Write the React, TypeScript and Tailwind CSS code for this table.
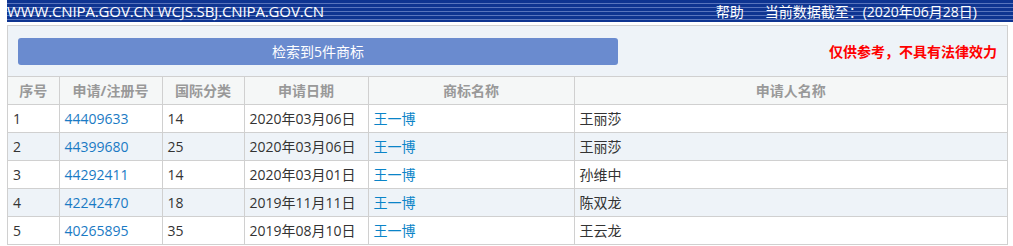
import React from 'react';

interface Row {
  no: number;
  regNo: string;
  cls: string;
  date: string;
  name: string;
  applicant: string;
}

const rows: Row[] = [
  { no: 1, regNo: '44409633', cls: '14', date: '2020年03月06日', name: '王一博', applicant: '王丽莎' },
  { no: 2, regNo: '44399680', cls: '25', date: '2020年03月06日', name: '王一博', applicant: '王丽莎' },
  { no: 3, regNo: '44292411', cls: '14', date: '2020年03月01日', name: '王一博', applicant: '孙维中' },
  { no: 4, regNo: '42242470', cls: '18', date: '2019年11月11日', name: '王一博', applicant: '陈双龙' },
  { no: 5, regNo: '40265895', cls: '35', date: '2019年08月10日', name: '王一博', applicant: '王云龙' },
];

const font = { fontFamily: '"Open Sans", "Noto Sans CJK SC", sans-serif' };

export default function App() {
  return (
    <div className="w-[1013px] h-[246px] bg-white pl-[7px] text-[14px] text-[#333]" style={font}>
      {/* Top bar */}
      <div className="h-[22px] flex items-center text-white bg-[repeating-linear-gradient(180deg,#0e3491_0px,#0e3491_3px,#5874bd_3px,#5874bd_4px)]">
        <span className="text-[15px] leading-none pt-[1px] tracking-[-0.13px]">WWW.CNIPA.GOV.CN WCJS.SBJ.CNIPA.GOV.CN</span>
        <span className="ml-auto text-[14px] leading-none pt-[1px]">帮助</span>
        <span className="ml-[21px] mr-[36px] text-[14px] leading-none pt-[1px]">当前数据截至：(2020年06月28日)</span>
      </div>

      {/* Panel */}
      <div className="mt-[3px] w-[1001px] border-x border-[#d0d0d0]">
        <div className="h-[51px] bg-[#eef3f8] flex items-center pl-[10px] pr-[10px] border-t border-[#d0d0d0]">
          <div className="w-[600px] h-[27px] mt-[1px] rounded-[3px] bg-[#6a8bcf] text-white flex items-center justify-center">
            检索到5件商标
          </div>
          <div className="ml-auto font-bold text-[#ff0000] mt-[1px]">仅供参考，不具有法律效力</div>
        </div>

        <table className="w-full border-collapse table-fixed">
          <colgroup>
            <col className="w-[51px]" />
            <col className="w-[103px]" />
            <col className="w-[82px]" />
            <col className="w-[124px]" />
            <col className="w-[206px]" />
            <col />
          </colgroup>
          <thead>
            <tr className="h-[28px] bg-[#f5f7f7] text-[#999] font-bold">
              {['序号', '申请/注册号', '国际分类', '申请日期', '商标名称', '申请人名称'].map((h, i) => (
                <th
                  key={h}
                  className={`border-y border-[#d0d0d0] font-bold text-center ${i > 0 ? 'border-l' : ''}`}
                >
                  {h}
                </th>
              ))}
            </tr>
          </thead>
          <tbody>
            {rows.map((r) => (
              <tr key={r.no} className={`h-[28px] ${r.no % 2 === 0 ? 'bg-[#eef3f8]' : 'bg-white'}`}>
                <td className="border-y border-[#d0d0d0] pl-[5px]">{r.no}</td>
                <td className="border border-[#d0d0d0] pl-[5px] text-[#1a7ac4]">{r.regNo}</td>
                <td className="border border-[#d0d0d0] pl-[5px]">{r.cls}</td>
                <td className="border border-[#d0d0d0] pl-[5px]">{r.date}</td>
                <td className="border border-[#d0d0d0] pl-[5px] text-[#0a84c8]">{r.name}</td>
                <td className="border-y border-l border-[#d0d0d0] pl-[5px]">{r.applicant}</td>
              </tr>
            ))}
          </tbody>
        </table>
      </div>
    </div>
  );
}
